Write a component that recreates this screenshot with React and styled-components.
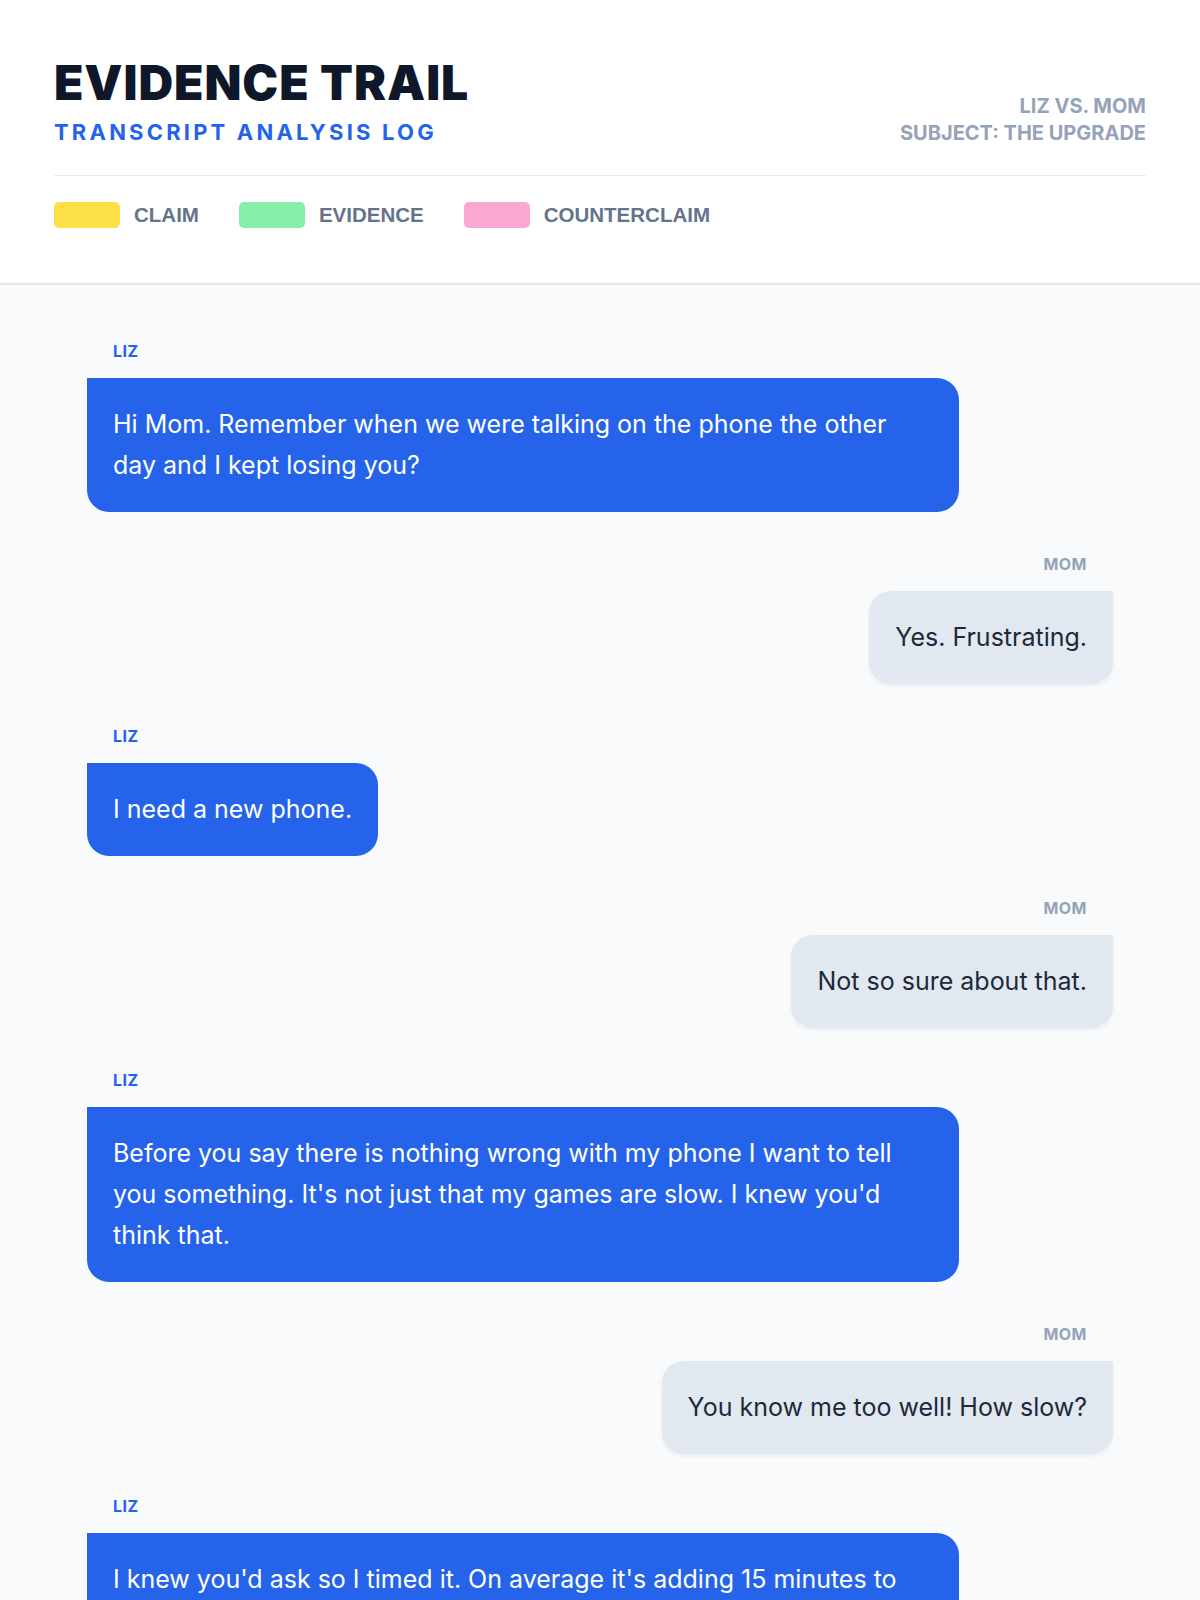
import styled, { createGlobalStyle } from 'styled-components';

const GlobalStyle = createGlobalStyle`
  html, body {
    margin: 0;
    padding: 0;
    background: #f8fafc;
    font-family: Inter, "Noto Sans", sans-serif;
  }
`;

// Header
const Header = styled.header`
  background: #ffffff;
  border-bottom: 2px solid #e2e8f0;
  padding: 59px 54px 0;
`;

const TopRow = styled.div`
  display: flex;
  justify-content: space-between;
  align-items: flex-end;
  padding-bottom: 30px;
  border-bottom: 1px solid #e9edf2;
`;

const Title = styled.h1`
  margin: 0;
  font-family: Inter, sans-serif;
  font-weight: 900;
  font-size: 48px;
  line-height: 1;
  letter-spacing: 0.02em;
  color: #0f172a;
`;

const Subtitle = styled.div`
  margin-top: 12px;
  font-family: Inter, sans-serif;
  font-weight: 700;
  font-size: 22px;
  line-height: 26px;
  letter-spacing: 0.145em;
  color: #2563eb;
`;

const Meta = styled.div`
  text-align: right;
  font-family: Inter, sans-serif;
  font-weight: 700;
  font-size: 20px;
  line-height: 27px;
  color: #94a3b8;
  margin-bottom: -2px;
`;

const Legend = styled.div`
  display: flex;
  align-items: center;
  gap: 40px;
  padding: 26px 0 55px;
`;

const LegendItem = styled.div`
  display: flex;
  align-items: center;
  gap: 14px;
`;

const Swatch = styled.span`
  width: 66px;
  height: 26px;
  border-radius: 5px;
  background: ${(p) => p.$color};
`;

const LegendLabel = styled.span`
  font-family: "Liberation Sans", Arial, sans-serif;
  font-weight: 700;
  font-size: 20.5px;
  color: #64748b;
`;

// Transcript
const Transcript = styled.main`
  max-width: 1026px;
  margin: 0 auto;
  padding: 56px 0 40px;
  display: flex;
  flex-direction: column;
  gap: 42px;
`;

const Message = styled.div`
  display: flex;
  flex-direction: column;
  align-items: ${(p) => (p.$mom ? 'flex-end' : 'flex-start')};
`;

const Speaker = styled.div`
  font-family: Inter, sans-serif;
  font-weight: 700;
  font-size: 16px;
  line-height: 20px;
  letter-spacing: 0.03em;
  margin: 0 26px 17px;
  color: ${(p) => (p.$mom ? '#94a3b8' : '#2563eb')};
`;

const Bubble = styled.div`
  max-width: 85%;
  box-sizing: border-box;
  padding: 26px;
  font-family: Inter, sans-serif;
  font-size: 25px;
  line-height: 41px;
  border-radius: ${(p) => (p.$mom ? '22px 0 22px 22px' : '0 22px 22px 22px')};
  background: ${(p) => (p.$mom ? '#e2e8f0' : '#2563eb')};
  color: ${(p) => (p.$mom ? '#1e293b' : '#ffffff')};
  box-shadow: ${(p) => (p.$mom ? '0 2px 4px rgba(15, 23, 42, 0.06)' : 'none')};
`;

const legend = [
  { label: 'CLAIM', color: '#fde047' },
  { label: 'EVIDENCE', color: '#86efac' },
  { label: 'COUNTERCLAIM', color: '#f9a8d4' },
];

const messages = [
  { who: 'LIZ', text: 'Hi Mom. Remember when we were talking on the phone the other day and I kept losing you?' },
  { who: 'MOM', text: 'Yes. Frustrating.' },
  { who: 'LIZ', text: 'I need a new phone.' },
  { who: 'MOM', text: 'Not so sure about that.' },
  {
    who: 'LIZ',
    text: "Before you say there is nothing wrong with my phone I want to tell you something. It's not just that my games are slow. I knew you'd think that.",
  },
  { who: 'MOM', text: 'You know me too well! How slow?' },
  {
    who: 'LIZ',
    text: "I knew you'd ask so I timed it. On average it's adding 15 minutes to my homework every night because the apps keep freezing.",
  },
];

export default function App() {
  return (
    <>
      <GlobalStyle />
      <Header>
        <TopRow>
          <div>
            <Title>EVIDENCE TRAIL</Title>
            <Subtitle>TRANSCRIPT ANALYSIS LOG</Subtitle>
          </div>
          <Meta>
            <div>LIZ VS. MOM</div>
            <div>SUBJECT: THE UPGRADE</div>
          </Meta>
        </TopRow>
        <Legend>
          {legend.map((l) => (
            <LegendItem key={l.label}>
              <Swatch $color={l.color} />
              <LegendLabel>{l.label}</LegendLabel>
            </LegendItem>
          ))}
        </Legend>
      </Header>
      <Transcript>
        {messages.map((m, i) => {
          const mom = m.who === 'MOM';
          return (
            <Message key={i} $mom={mom}>
              <Speaker $mom={mom}>{m.who}</Speaker>
              <Bubble $mom={mom}>{m.text}</Bubble>
            </Message>
          );
        })}
      </Transcript>
    </>
  );
}
